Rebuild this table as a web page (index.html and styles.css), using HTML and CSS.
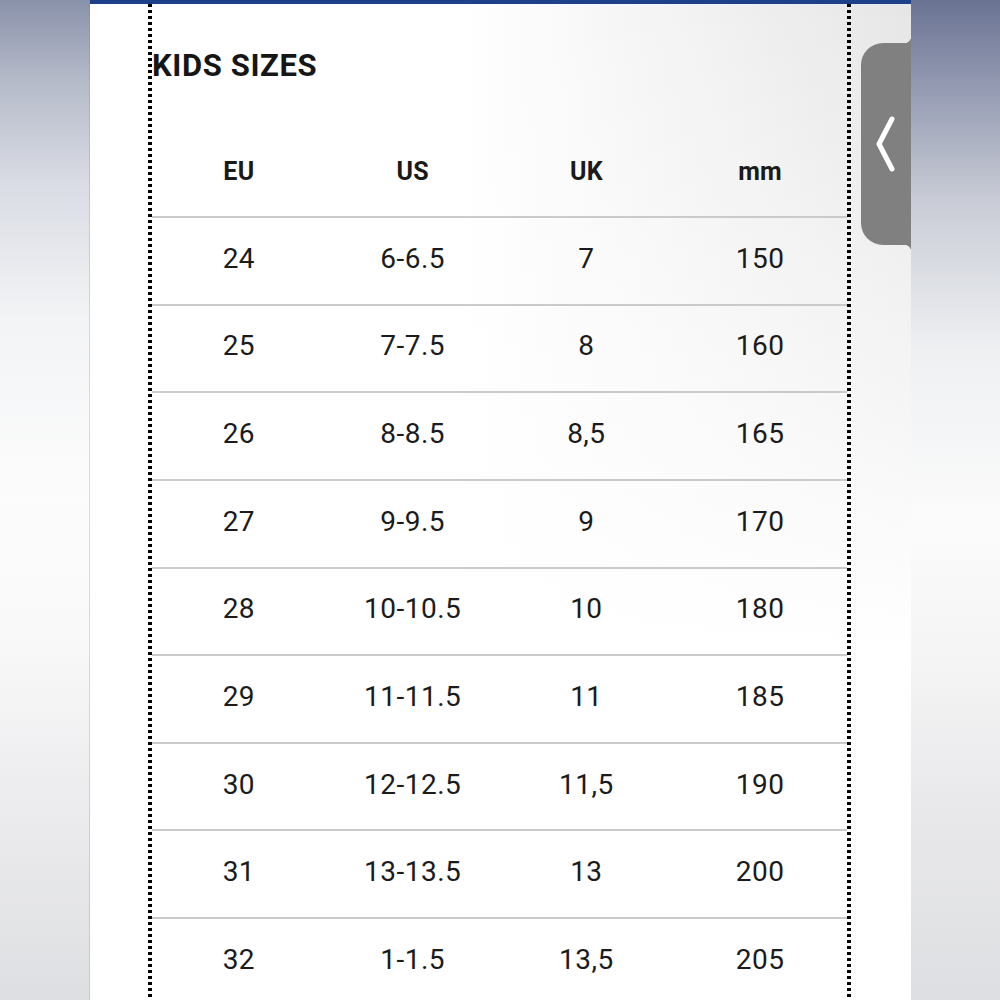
FILE: index.html
```
<!DOCTYPE html>
<html lang="en">
<head>
<meta charset="utf-8">
<title>Kids sizes</title>
<link rel="stylesheet" href="styles.css">
</head>
<body>
<div class="page">
  <div class="side side-left"></div>
  <main class="panel">
    <div class="bar"></div>
    <div class="sheet">
      <h1 class="title">KIDS SIZES</h1>
      <div class="table">
        <div class="row head"><span>EU</span><span>US</span><span>UK</span><span>mm</span></div>
        <div class="row"><span>24</span><span>6-6.5</span><span>7</span><span>150</span></div>
        <div class="row"><span>25</span><span>7-7.5</span><span>8</span><span>160</span></div>
        <div class="row"><span>26</span><span>8-8.5</span><span>8,5</span><span>165</span></div>
        <div class="row"><span>27</span><span>9-9.5</span><span>9</span><span>170</span></div>
        <div class="row"><span>28</span><span>10-10.5</span><span>10</span><span>180</span></div>
        <div class="row"><span>29</span><span>11-11.5</span><span>11</span><span>185</span></div>
        <div class="row"><span>30</span><span>12-12.5</span><span>11,5</span><span>190</span></div>
        <div class="row"><span>31</span><span>13-13.5</span><span>13</span><span>200</span></div>
        <div class="row"><span>32</span><span>1-1.5</span><span>13,5</span><span>205</span></div>
      </div>
    </div>
    <div class="tab">
      <svg width="50" height="202" viewBox="0 0 50 202" aria-hidden="true">
        <polyline points="31,76 18,101 31,126" fill="none" stroke="#fff" stroke-width="5" stroke-linecap="round" stroke-linejoin="round"/>
      </svg>
    </div>
  </main>
  <div class="side side-right"></div>
</div>
</body>
</html>
```

FILE: styles.css
```
html, body {
  margin: 0;
  padding: 0;
  width: 1000px;
  height: 1000px;
  overflow: hidden;
}

body {
  font-family: Roboto, "Liberation Sans", sans-serif;
  color: #1b1b1b;
}

.page {
  display: flex;
  width: 1000px;
  height: 1000px;
}

.side {
  flex: none;
  height: 1000px;
}

.side-left {
  width: 90px;
  background: linear-gradient(to bottom, #8a92ab 0%, #b5bac9 8%, #d8dbe3 18%, #f3f4f6 32%, #fcfcfc 50%, #f8f8f9 65%, #ececee 80%, #dedfe2 100%);
  box-shadow: inset -1px 0 0 rgba(120, 125, 140, 0.25);
}

.side-right {
  width: 89px;
  background: linear-gradient(to bottom, #6a7393 0%, #9aa0b6 10%, #c9ccd6 20%, #eef0f2 35%, #fbfbfb 52%, #f5f5f6 65%, #e9e9eb 80%, #dedfe2 100%);
}

.panel {
  position: relative;
  flex: none;
  width: 821px;
  height: 1000px;
  display: flex;
  flex-direction: column;
  background:
    linear-gradient(to bottom, rgba(255,255,255,0) 0%, #ffffff 65%),
    linear-gradient(to right, #ffffff 45%, #e6e6e6 100%);
}

.bar {
  flex: none;
  height: 4px;
  background: #1e408a;
}

.sheet {
  flex: 1;
  margin-left: 58px;
  width: 695px;
  padding: 44px 4px 0;
  background:
    repeating-linear-gradient(to bottom, #000 0 3px, transparent 3px 6px) left top / 4px 100% no-repeat,
    repeating-linear-gradient(to bottom, #000 0 3px, transparent 3px 6px) right top / 4px 100% no-repeat;
}

.title {
  margin: 0;
  font-size: 31px;
  line-height: 36px;
  font-weight: 700;
  letter-spacing: 0.6px;
  color: #161616;
}

.table {
  margin-top: 43px;
}

.row {
  display: grid;
  grid-template-columns: repeat(4, 1fr);
  box-sizing: border-box;
  height: 87.625px;
  border-top: 2px solid #cacaca;
  align-items: center;
  font-size: 28px;
  padding-bottom: 4px;
  letter-spacing: 0.5px;
}

.row span {
  text-align: center;
  line-height: 32px;
}

.row.head {
  height: 89px;
  border-top: none;
  font-size: 25px;
  font-weight: 700;
  padding-bottom: 0;
  letter-spacing: 0.3px;
  color: #1a1a1a;
}

.tab {
  position: absolute;
  top: 43px;
  right: 0;
  width: 50px;
  height: 202px;
  background: #808080;
  border-radius: 22px 0 0 22px;
}

.tab::before,
.tab::after {
  content: "";
  position: absolute;
  right: 0;
  width: 7px;
  height: 7px;
}

.tab::before {
  top: -7px;
  background: radial-gradient(circle at 0 0, transparent 7px, #808080 7.5px);
}

.tab::after {
  bottom: -7px;
  background: radial-gradient(circle at 0 100%, transparent 7px, #808080 7.5px);
}

.tab svg {
  display: block;
}
```
